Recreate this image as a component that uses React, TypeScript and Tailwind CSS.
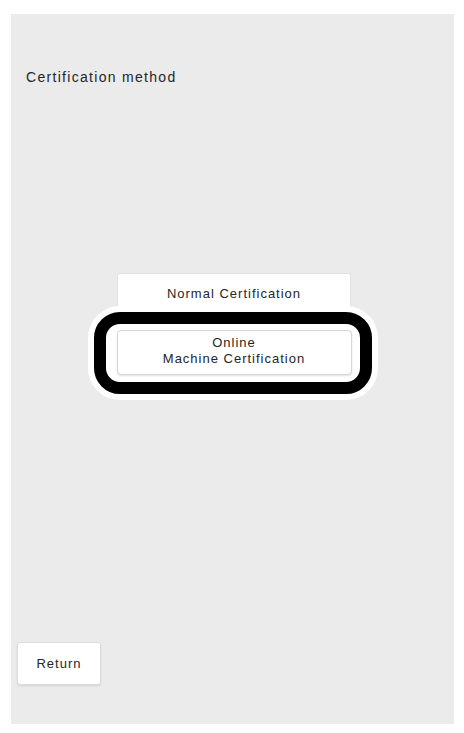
export default function App() {
  return (
    <div className="min-h-[733px] w-[464px] bg-white pt-[14px] pl-[11px] font-['Liberation_Sans',Arial,sans-serif] text-[#262626]">
      {/* Panel */}
      <div className="flex h-[710px] w-[443px] flex-col bg-[#ebebeb]">
        <div className="mt-[55px] pl-[15px] text-[14px] leading-[16px] tracking-[1.3px]">
          Certification method
        </div>

        {/* Method buttons */}
        <div className="mt-[188px] flex flex-col items-center pl-[3px]">
          <button className="h-[44px] w-[234px] rounded-[3px] border border-[#e2e2e2] bg-white pb-[2px] text-[13px] tracking-[1px] text-[#262626]">
            Normal Certification
          </button>
          <div className="relative mt-[13px]">
            <div className="absolute -top-[18px] -right-[20px] -bottom-[19px] -left-[23px] rounded-[26px] border-[12px] border-black bg-white shadow-[0_0_0_6px_#ffffff]" />
            <button className="relative z-10 flex h-[45px] w-[235px] flex-col items-center justify-center rounded-[4px] border border-[#d6d6d6] bg-white pb-[4px] text-[13px] leading-[16px] tracking-[1px] text-[#262626] shadow-[0_1px_2px_rgba(0,0,0,0.12)]">
              <span>Online</span>
              <span>Machine Certification</span>
            </button>
          </div>
        </div>

        <div className="flex-1" />

        <div className="mb-[39px] ml-[6px]">
          <button className="h-[43px] w-[84px] rounded-[3px] border border-[#dcdcdc] bg-white text-[13px] tracking-[1px] text-[#262626] shadow-[0_1px_2px_rgba(0,0,0,0.1)]">
            Return
          </button>
        </div>
      </div>
    </div>
  );
}
